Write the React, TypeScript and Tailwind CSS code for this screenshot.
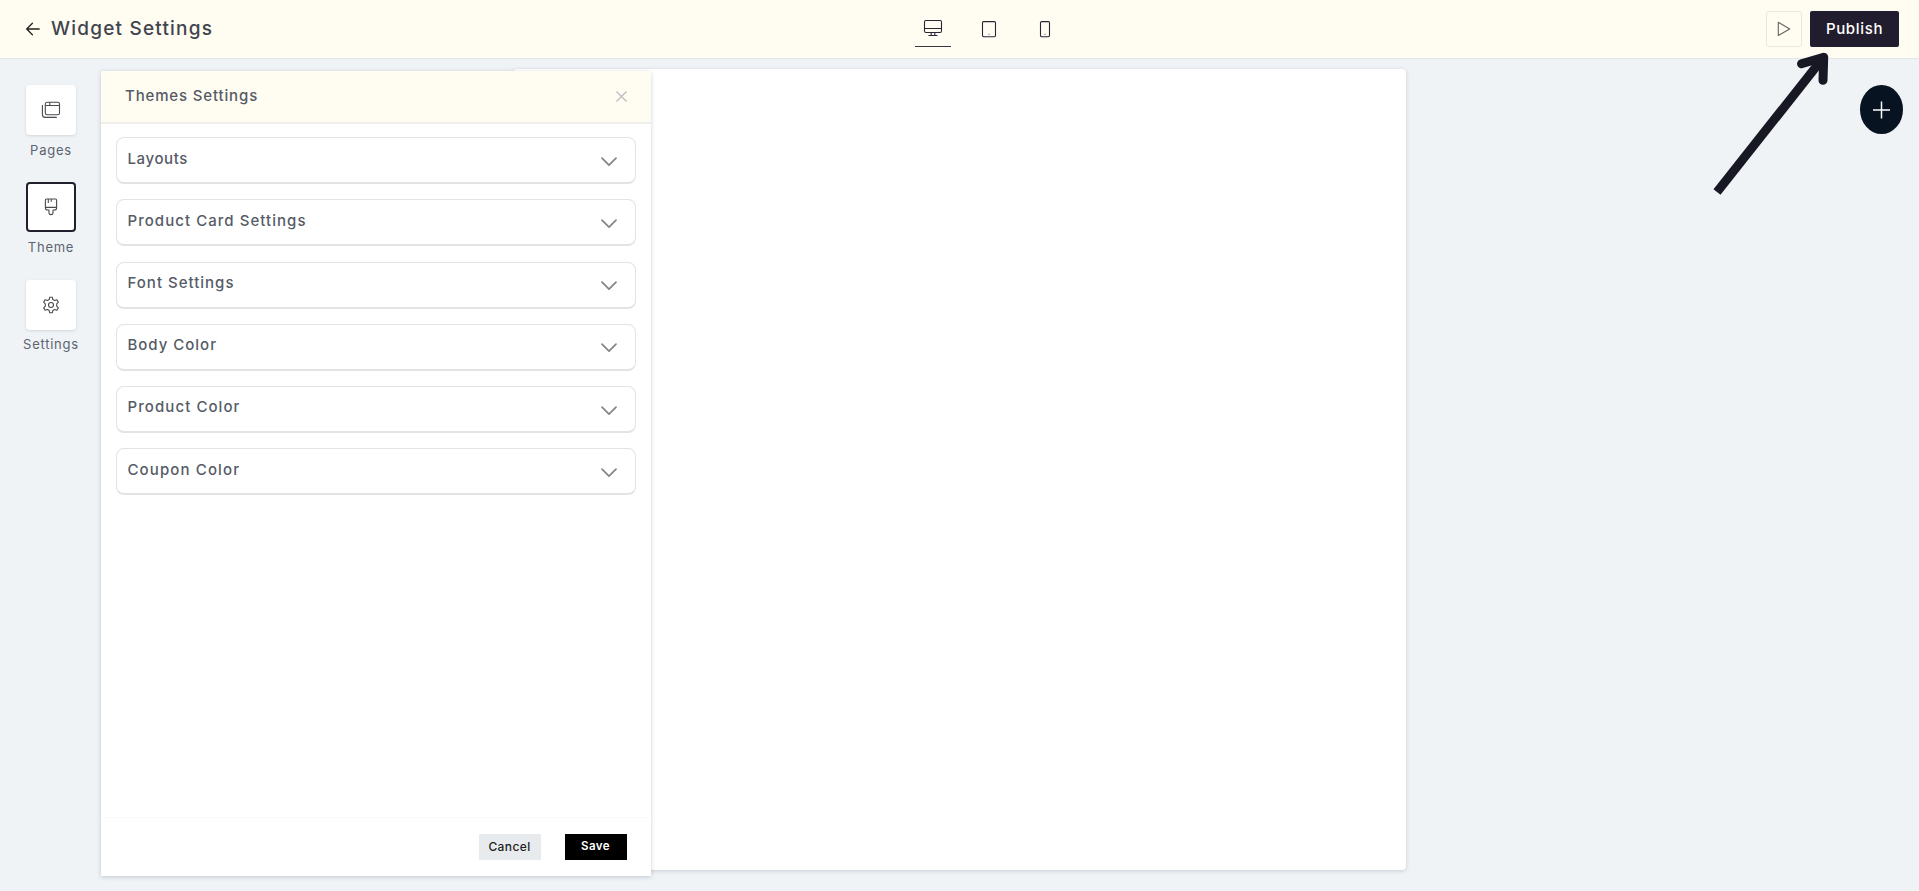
import type { ReactNode } from 'react';

const PANEL_SECTIONS = [
  { title: 'Layouts', tracking: 'tracking-[0.6px]' },
  { title: 'Product Card Settings', tracking: 'tracking-[1.05px]' },
  { title: 'Font Settings', tracking: 'tracking-[1px]' },
  { title: 'Body Color', tracking: 'tracking-[0.98px]' },
  { title: 'Product Color', tracking: 'tracking-[1.08px]' },
  { title: 'Coupon Color', tracking: 'tracking-[1.12px]' },
];

function PagesIcon() {
  return (
    <svg width="20" height="18" viewBox="0 0 20 18" fill="none" stroke="#4a4a4f" strokeWidth="1.1">
      <rect x="4.3" y="1.3" width="14.2" height="12.4" rx="1.8" />
      <path d="M4.3 4.5h14.2M8.8 1.3v3.2" />
      <path d="M1.4 4.4v9a3 3 0 0 0 3 3h11" strokeLinecap="round" />
    </svg>
  );
}

function BrushIcon() {
  return (
    <svg width="14" height="18" viewBox="0 0 14 18" fill="none" stroke="#4a4a4f" strokeWidth="1.1" strokeLinejoin="round">
      <path d="M2.6 1h8.8a1.2 1.2 0 0 1 1.2 1.2V10a2 2 0 0 1-2 2H9v2.9a2 1.7 0 0 1-4 0V12H3.4a2 2 0 0 1-2-2V2.2A1.2 1.2 0 0 1 2.6 1Z" />
      <path d="M1.4 9.4h11.2M4.3 1v4M7.2 1v2.8" />
    </svg>
  );
}

function GearIcon() {
  return (
    <svg width="18" height="18" viewBox="0 0 18 18" fill="none" stroke="#4a4a4f" strokeWidth="1.1" strokeLinejoin="round">
      <path d="M7.7 1.2h2.6l.5 2.3 1.7 1 2.4-.8 1.4 2.4-1.6 1.8v2.2l1.6 1.8-1.4 2.4-2.4-.8-1.7 1-.5 2.3H7.7l-.5-2.3-1.7-1-2.4.8-1.4-2.4 1.6-1.8V7.9L1.7 6.1l1.4-2.4 2.4.8 1.7-1Z" />
      <circle cx="9" cy="9" r="2.5" />
    </svg>
  );
}

interface SideItemProps {
  label: string;
  active?: boolean;
  children: ReactNode;
}

function SideItem({ label, active, children }: SideItemProps) {
  return (
    <div className="flex h-[97.3px] w-[102px] flex-col items-center">
      <button
        className={
          active
            ? 'flex size-[50px] shrink-0 items-center justify-center rounded border-2 border-[#211f2e] bg-white'
            : 'flex size-[50px] shrink-0 items-center justify-center rounded bg-white shadow-[0_1px_3px_rgba(0,0,0,0.12)]'
        }
      >
        {children}
      </button>
      <span className="mt-[4.6px] text-[13px] leading-5 tracking-[0.75px] text-[#5c6370]">{label}</span>
    </div>
  );
}

function Header() {
  return (
    <header className="flex h-[59px] shrink-0 items-center border-b border-[#e4e7ea] bg-[#fffcf1]">
      <div className="flex w-[915px] items-center pl-[25px]">
        <svg width="16" height="14" viewBox="0 0 16 14" fill="none" stroke="#222" strokeWidth="1.3" strokeLinecap="round" strokeLinejoin="round">
          <path d="M14.2 7H2M7.4 1.3 1.7 7l5.7 5.7" />
        </svg>
        <h1 className="ml-[10px] text-[19px] leading-6 font-medium tracking-[1.2px] text-[#41454d]">Widget Settings</h1>
      </div>

      {/* Device switcher */}
      <div className="flex w-[156px] items-start pt-[6px] text-[#2e2438]">
        <button className="flex h-[29px] w-9 items-start justify-center border-b-[1.5px] border-[#3a3540] pt-px">
          <svg width="20" height="18" viewBox="0 0 20 18" fill="none" stroke="currentColor" strokeWidth="1.1">
            <rect x="1.5" y="1.5" width="17" height="12" rx="1.4" />
            <path d="M1.5 9.5h17M8.2 13.5v2.6M11.8 13.5v2.6M5.5 16.5h9" />
          </svg>
        </button>
        <button className="ml-[30px] pt-[3px]">
          <svg width="16" height="18" viewBox="0 0 16 18" fill="none" stroke="currentColor" strokeWidth="1.1">
            <rect x="1.5" y="0.6" width="13" height="15.2" rx="1.2" />
            <path d="M7 13.2h2" stroke="#aaa5ad" />
          </svg>
        </button>
        <button className="ml-[42px] pt-[3px]">
          <svg width="12" height="18" viewBox="0 0 12 18" fill="none" stroke="currentColor" strokeWidth="1.1">
            <rect x="1.5" y="0.6" width="9" height="15.2" rx="1.2" />
            <path d="M5 13.2h2" stroke="#aaa5ad" />
          </svg>
        </button>
      </div>

      <div className="ml-auto flex items-center pr-5">
        <button className="flex size-9 items-center justify-center rounded-[3px] border border-[#e8e7e2]">
          <svg width="14" height="16" viewBox="0 0 14 16" fill="none" stroke="#66645f" strokeWidth="1.1" strokeLinejoin="round">
            <path d="M1.3 1.3v13.2L12.7 8Z" />
          </svg>
        </button>
        <button className="ml-2 h-9 w-[89px] rounded-[2px] bg-[#211d2e] text-[15px] font-medium tracking-[0.65px] text-white">
          Publish
        </button>
      </div>
    </header>
  );
}

function ThemePanel() {
  return (
    <section className="z-10 mt-3 flex h-[805px] w-[550px] shrink-0 flex-col rounded-t-[3px] bg-white shadow-[0_1px_4px_rgba(40,50,80,0.22)]">
      <div className="flex h-[53px] shrink-0 items-center justify-between rounded-t-[3px] border-b-2 border-[#efefeb] bg-[#fffcf1] pr-6 pl-6">
        <h2 className="-mt-0.5 text-[15px] leading-5 font-medium tracking-[0.85px] text-[#555b66]">Themes Settings</h2>
        <button>
          <svg width="11" height="11" viewBox="0 0 11 11" stroke="#bdbdbd" strokeWidth="1.3">
            <path d="m0.5 0.5 10 10M10.5 0.5l-10 10" />
          </svg>
        </button>
      </div>

      <div className="flex flex-1 flex-col gap-[15.2px] px-[15px] pt-[13.3px]">
        {PANEL_SECTIONS.map((section) => (
          <button
            key={section.title}
            className="flex h-[47px] items-start justify-between rounded-lg border border-b-2 border-[#e3e3e3] pr-[18px] pl-[10.5px]"
          >
            <span className={`mt-[10.4px] text-[15px] leading-5 font-medium text-[#555b66] ${section.tracking}`}>
              {section.title}
            </span>
            <svg className="mt-[18.5px]" width="16" height="10" viewBox="0 0 16 10" fill="none" stroke="#858585" strokeWidth="1.7" strokeLinecap="round" strokeLinejoin="round">
              <path d="m1 1.2 7 7 7-7" />
            </svg>
          </button>
        ))}
      </div>

      <div className="flex h-[59px] shrink-0 items-start justify-end gap-6 border-t border-[#fafafa] pt-4 pr-[24.5px] text-xs tracking-[0.4px]">
        <button className="h-[26px] w-[62px] bg-[#e8ebee] font-medium text-[#1c1f24]">Cancel</button>
        <button className="h-[26px] w-[62px] bg-black text-[11.5px] font-semibold text-white">Save</button>
      </div>
    </section>
  );
}

export default function App() {
  return (
    <div className="relative flex h-[891px] w-[1919px] flex-col overflow-hidden bg-[#eff3f6] font-['Inter',sans-serif]">
      <Header />
      <main className="flex flex-1 items-start">
        <nav className="flex w-[101px] shrink-0 flex-col pt-[26px]">
          <SideItem label="Pages"><PagesIcon /></SideItem>
          <SideItem label="Theme" active><BrushIcon /></SideItem>
          <SideItem label="Settings"><GearIcon /></SideItem>
        </nav>
        <ThemePanel />
        <div className="mt-[10px] -ml-[138px] h-[801px] w-[893px] shrink-0 rounded bg-white shadow-[0_1px_4px_rgba(40,50,80,0.2)]" />
        <button className="mt-[26px] mr-4 ml-auto flex h-[49px] w-[43px] items-center justify-center rounded-[50%] bg-[#071321]">
          <svg width="18" height="18" viewBox="0 0 18 18" stroke="#fff" strokeWidth="1.5">
            <path d="M8.5 0.5v17M0 9h17" />
          </svg>
        </button>
      </main>

      {/* Pointer towards the publish button */}
      <svg className="pointer-events-none absolute top-[48px] left-[1706px]" width="126" height="152" viewBox="0 0 126 152" fill="none" stroke="#181824" strokeWidth="9">
        <path d="M11 144 117 10" />
        <path d="M95.5 15.8 117.7 9.2 117 32.3" strokeLinecap="round" strokeLinejoin="round" />
      </svg>
    </div>
  );
}
